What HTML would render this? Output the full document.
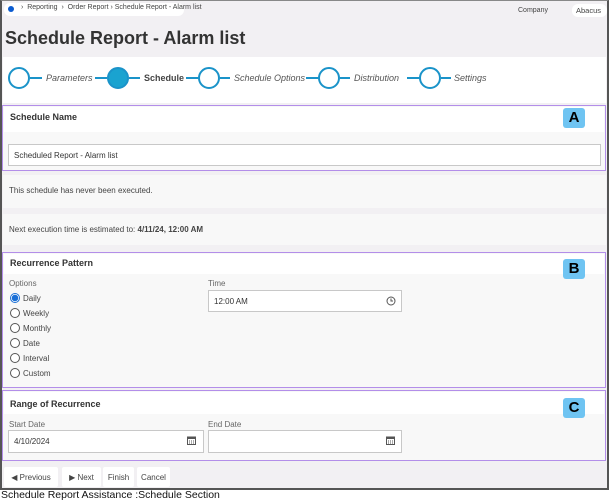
<!DOCTYPE html>
<html><head><style>
*{box-sizing:border-box;margin:0;padding:0}
body{width:609px;height:502px;background:#fff;font-family:"Liberation Sans",sans-serif;position:relative;overflow:hidden;color:#333}
.frame{position:absolute;left:0;top:0;width:609px;height:490px;background:#f2f0f3;border:2px solid #555;border-top:1px solid #888}
.a{position:absolute}
.t{font-size:8px;color:#444}
.pill{background:#fff;border-radius:6px}
.box{border:1.5px solid #b38ee9}
.hdr{background:#fff;font-size:9px;font-weight:bold;color:#333;padding-left:6px}
.in{background:#fff;border:1px solid #c8c8c8;font-size:8px;color:#333;padding-left:5px;display:flex;align-items:center}
.badge{width:22px;height:20px;background:#6fc4f2;border-radius:3px;font-weight:bold;font-size:15px;color:#000;text-align:center;line-height:20px}
.c{width:22px;height:22px;border:2px solid #1a93c9;border-radius:50%;background:#fff}
.ln{height:2px;background:#1a93c9}
.st{font-size:9px;font-style:italic;color:#555}
.rad{width:10px;height:10px;border:1px solid #555;border-radius:50%;background:#fff}
.btn{background:#fff;height:20px;font-size:8px;color:#444;display:flex;align-items:center;justify-content:center;border-radius:2px}
</style></head><body>
<div class="frame"></div>
<div class="a pill" style="left:4px;top:3px;width:180px;height:13px"></div>
<div class="a" style="left:8px;top:6px;width:6px;height:6px;border-radius:50%;background:#0a5bd0"></div>
<div class="a t" style="left:21px;top:4px;font-size:7px">›&nbsp; Reporting &nbsp;›&nbsp; Order Report › Schedule Report - Alarm list</div>
<div class="a t" style="left:518px;top:7px;font-size:7px">Company</div>
<div class="a pill" style="left:572px;top:4px;width:35px;height:13px"></div>
<div class="a t" style="left:576px;top:6px;font-size:7.5px">Abacus</div>
<div class="a" style="left:5px;top:28px;font-size:18px;font-weight:bold;color:#333">Schedule Report - Alarm list</div>
<div class="a" style="left:3px;top:57px;width:603px;height:46px;background:#fff"></div>
<div class="a c" style="left:8px;top:67px"></div><div class="a ln" style="left:30px;top:77px;width:12px"></div>
<div class="a st" style="left:46px;top:73px">Parameters</div>
<div class="a ln" style="left:95px;top:77px;width:12px"></div><div class="a c" style="left:107px;top:67px;background:#1aa3d0"></div><div class="a ln" style="left:129px;top:77px;width:11px"></div>
<div class="a" style="left:144px;top:73px;font-size:9px;font-weight:bold;color:#444">Schedule</div>
<div class="a ln" style="left:186px;top:77px;width:13px"></div><div class="a c" style="left:198px;top:67px"></div><div class="a ln" style="left:220px;top:77px;width:10px"></div>
<div class="a st" style="left:234px;top:73px">Schedule Options</div>
<div class="a ln" style="left:306px;top:77px;width:13px"></div><div class="a c" style="left:318px;top:67px"></div><div class="a ln" style="left:340px;top:77px;width:10px"></div>
<div class="a st" style="left:354px;top:73px">Distribution</div>
<div class="a ln" style="left:407px;top:77px;width:13px"></div><div class="a c" style="left:419px;top:67px"></div><div class="a ln" style="left:441px;top:77px;width:10px"></div>
<div class="a st" style="left:454px;top:73px">Settings</div>

<div class="a box" style="left:2px;top:105px;width:604px;height:66px;background:#f8f8f8"></div>
<div class="a hdr" style="left:4px;top:107px;width:600px;height:25px;line-height:20px">Schedule Name</div>
<div class="a badge" style="left:563px;top:108px">A</div>
<div class="a in" style="left:8px;top:144px;width:593px;height:22px">Scheduled Report - Alarm list</div>

<div class="a" style="left:3px;top:175px;width:603px;height:33px;background:#f8f8f8"></div>
<div class="a t" style="left:9px;top:186px">This schedule has never been executed.</div>
<div class="a" style="left:3px;top:214px;width:603px;height:31px;background:#f8f8f8"></div>
<div class="a t" style="left:9px;top:225px">Next execution time is estimated to: <b>4/11/24, 12:00 AM</b></div>

<div class="a box" style="left:2px;top:252px;width:604px;height:136px;background:#f8f8f8"></div>
<div class="a hdr" style="left:4px;top:254px;width:600px;height:20px;line-height:18px">Recurrence Pattern</div>
<div class="a badge" style="left:563px;top:259px">B</div>
<div class="a t" style="left:9px;top:279px;color:#666">Options</div>
<div class="a t" style="left:208px;top:279px;color:#666">Time</div>
<div class="a in" style="left:208px;top:290px;width:194px;height:22px">12:00 AM</div>
<svg class="a" style="left:386px;top:296px" width="10" height="10" viewBox="0 0 10 10"><circle cx="5" cy="5" r="4" fill="none" stroke="#555" stroke-width="1"/><path d="M5 2.5V5H7" fill="none" stroke="#555"/></svg>
<div class="a rad" style="left:10px;top:293px;border-color:#1a6fd6;background:radial-gradient(circle,#1a6fd6 55%,#fff 60%)"></div><div class="a t" style="left:23px;top:294px">Daily</div>
<div class="a rad" style="left:10px;top:308px"></div><div class="a t" style="left:23px;top:309px">Weekly</div>
<div class="a rad" style="left:10px;top:323px"></div><div class="a t" style="left:23px;top:324px">Monthly</div>
<div class="a rad" style="left:10px;top:338px"></div><div class="a t" style="left:23px;top:339px">Date</div>
<div class="a rad" style="left:10px;top:353px"></div><div class="a t" style="left:23px;top:354px">Interval</div>
<div class="a rad" style="left:10px;top:368px"></div><div class="a t" style="left:23px;top:369px">Custom</div>

<div class="a box" style="left:2px;top:390px;width:604px;height:71px;background:#f8f8f8"></div>
<div class="a hdr" style="left:4px;top:392px;width:600px;height:22px;line-height:24px">Range of Recurrence</div>
<div class="a badge" style="left:563px;top:398px">C</div>
<div class="a t" style="left:9px;top:420px;color:#666">Start Date</div>
<div class="a t" style="left:208px;top:420px;color:#666">End Date</div>
<div class="a in" style="left:8px;top:430px;width:196px;height:23px">4/10/2024</div>
<div class="a in" style="left:208px;top:430px;width:194px;height:23px"></div>
<svg class="a" style="left:187px;top:436px" width="9" height="9" viewBox="0 0 9 9"><rect x="0.5" y="1" width="8" height="7.5" fill="none" stroke="#555"/><rect x="0.5" y="1" width="8" height="2" fill="#555"/><path d="M2 5h1M4 5h1M6 5h1M2 7h1M4 7h1M6 7h1" stroke="#555"/></svg>
<svg class="a" style="left:386px;top:436px" width="9" height="9" viewBox="0 0 9 9"><rect x="0.5" y="1" width="8" height="7.5" fill="none" stroke="#555"/><rect x="0.5" y="1" width="8" height="2" fill="#555"/><path d="M2 5h1M4 5h1M6 5h1M2 7h1M4 7h1M6 7h1" stroke="#555"/></svg>

<div class="a btn" style="left:4px;top:467px;width:54px">◀ Previous</div>
<div class="a btn" style="left:62px;top:467px;width:39px">▶ Next</div>
<div class="a btn" style="left:103px;top:467px;width:31px">Finish</div>
<div class="a btn" style="left:137px;top:467px;width:33px">Cancel</div>
<div class="a" style="left:1px;top:489px;font-size:10.5px;color:#111">Schedule Report Assistance :Schedule Section</div>
</body></html>
